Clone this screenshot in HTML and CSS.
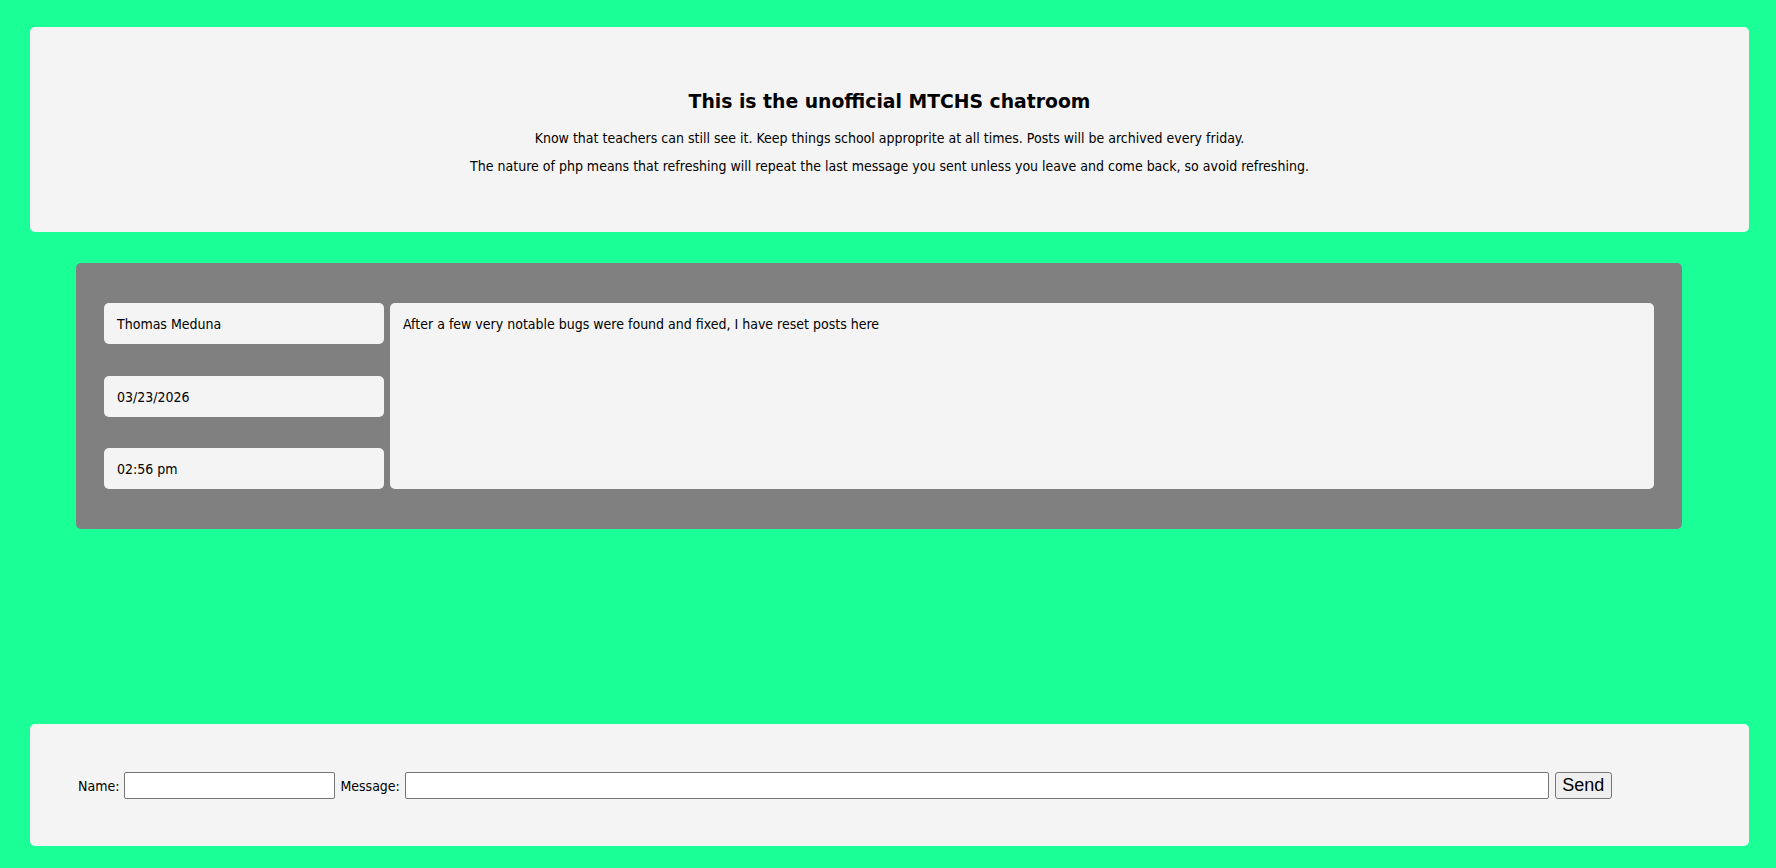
FILE: index.html
```html
<!DOCTYPE html>
<html lang="en">
<head>
<meta charset="utf-8">
<title>MTCHS chatroom</title>
<link rel="stylesheet" href="styles.css">
</head>
<body>
  <header class="intro card">
    <h1 class="intro-title">This is the unofficial MTCHS chatroom</h1>
    <p class="intro-text">Know that teachers can still see it. Keep things school approprite at all times. Posts will be archived every friday.</p>
    <p class="intro-text">The nature of php means that refreshing will repeat the last message you sent unless you leave and come back, so avoid refreshing.</p>
  </header>

  <main class="posts">
    <article class="post">
      <div class="post-meta">
        <div class="meta-box">Thomas Meduna</div>
        <div class="meta-box">03/23/2026</div>
        <div class="meta-box">02:56 pm</div>
      </div>
      <div class="post-body">After a few very notable bugs were found and fixed, I have reset posts here</div>
    </article>
  </main>

  <footer class="composer card">
    <form class="composer-form" onsubmit="return false;">
      <label class="field-label" for="name">Name:</label>
      <input class="field field-name" id="name" type="text">
      <label class="field-label" for="msg">Message:</label>
      <input class="field field-msg" id="msg" type="text">
      <button class="send-btn" type="submit">Send</button>
    </form>
  </footer>
</body>
</html>
```

FILE: styles.css
```css
html, body {
  margin: 0;
  padding: 0;
}

body {
  background: #1aff96;
  min-height: 100vh;
  display: flex;
  flex-direction: column;
  font-family: "DejaVu Sans Condensed", "DejaVu Sans", sans-serif;
  font-size: 14px;
  color: #000;
  box-sizing: border-box;
}

.card {
  background: #f4f4f4;
  border-radius: 5px;
  margin-left: 30px;
  margin-right: 27px;
}

.intro {
  margin-top: 27px;
  padding: 63px 20px 58px;
  text-align: center;
}

.intro-title {
  margin: 0 0 16px;
  font-family: "DejaVu Sans", sans-serif;
  font-size: 18.8px;
  line-height: 24px;
  font-weight: bold;
}

.intro-text {
  margin: 0;
  line-height: 16px;
}

.intro-text + .intro-text {
  margin-top: 12px;
}

.posts {
  margin: 31px 0 0 76px;
  width: 1606px;
  box-sizing: border-box;
  background: #808080;
  border-radius: 5px;
  padding: 40px 28px;
}

.post {
  display: grid;
  grid-template-columns: 280px 1fr;
  column-gap: 6px;
  height: 186px;
}

.post-meta {
  display: flex;
  flex-direction: column;
  justify-content: space-between;
}

.meta-box {
  background: #f4f4f4;
  border-radius: 5px;
  height: 41px;
  box-sizing: border-box;
  padding: 13px 13px 0;
  line-height: 16px;
}

.post-body {
  background: #f4f4f4;
  border-radius: 5px;
  padding: 13px;
  line-height: 16px;
}

.composer {
  margin-top: auto;
  margin-bottom: 22px;
  padding: 48px 48px 47px;
}

.composer-form {
  display: flex;
  align-items: center;
  gap: 5px;
}

.field-label {
  line-height: 16px;
}

.field {
  box-sizing: border-box;
  height: 27px;
  border: 1px solid #767676;
  border-radius: 2px;
  background: #fff;
  padding: 1px 2px;
  font-size: 18px;
  margin: 0;
}

.field-name {
  width: 211px;
}

.field-msg {
  width: 1144px;
}

.send-btn {
  box-sizing: border-box;
  height: 27px;
  width: 57px;
  margin: 0 0 0 1px;
  padding: 0;
  border: 1px solid #767676;
  border-radius: 3px;
  background: #efefef;
  font-family: "Liberation Sans", Arial, sans-serif;
  font-size: 18px;
  color: #000;
}
```
